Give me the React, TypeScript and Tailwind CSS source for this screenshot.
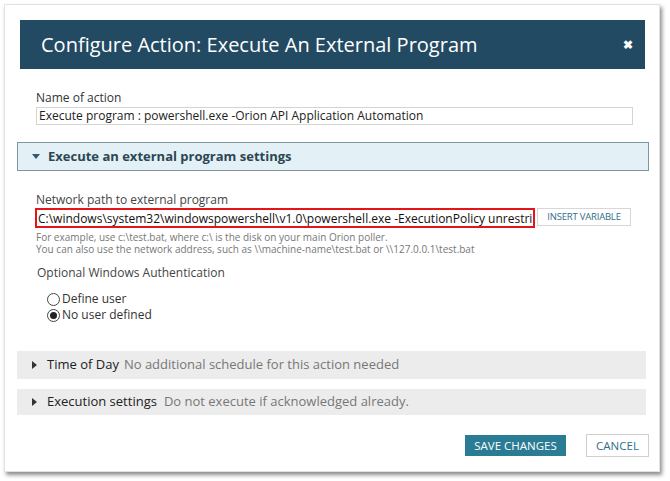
import React from "react";

const font = { fontFamily: '"Open Sans", "Noto Sans", Arial, sans-serif' };

function CaretDown() {
  return (
    <svg width="8" height="5" viewBox="0 0 8 5" className="shrink-0">
      <path d="M0 0 L8 0 L4 5 Z" fill="#2f5b70" />
    </svg>
  );
}

function CaretRight() {
  return (
    <svg width="5" height="8" viewBox="0 0 5 8" className="shrink-0">
      <path d="M0 0 L5 4 L0 8 Z" fill="#333" />
    </svg>
  );
}

function Radio({ checked }: { checked?: boolean }) {
  return (
    <span className="w-[13px] h-[13px] rounded-full border border-[#444] bg-white flex items-center justify-center shrink-0 mr-[1px]">
      {checked && <span className="w-[7px] h-[7px] rounded-full bg-[#222]" />}
    </span>
  );
}

export default function App() {
  return (
    <div className="w-[670px] h-[481px] bg-white pt-[4px] pl-[4px]" style={font}>
      <div className="w-[656px] h-[468px] bg-white shadow-[2px_3px_4px_rgba(0,0,0,0.45)] border border-[#e2e2e2] flex flex-col">
        {/* header */}
        <div className="mt-[15px] ml-[15px] w-[625px] h-[49px] bg-[#234a63] flex items-center justify-between pl-[21px] pr-[12px]">
          <span className="text-white text-[20px] leading-none">Configure Action: Execute An External Program</span>
          <span className="text-white text-[12px] font-bold leading-none">✖</span>
        </div>

        {/* name of action */}
        <div className="ml-[31px] mt-[21px] text-[12px] leading-[16px] text-[#333]">Name of action</div>
        <div className="ml-[31px] mt-[1px] w-[597px] h-[18px] border border-[#d4d4d4] flex items-center px-[2px] text-[12px] text-[#222] whitespace-nowrap overflow-hidden">
          Execute program : powershell.exe -Orion API Application Automation
        </div>

        {/* section header */}
        <div className="ml-[12px] mt-[17px] w-[632px] h-[29px] bg-[#e3f0f5] border border-[#7e97a3] flex items-center pl-[14px] gap-[8px]">
          <CaretDown />
          <span className="text-[13px] font-bold text-[#2c4654]">Execute an external program settings</span>
        </div>

        {/* network path */}
        <div className="ml-[31px] mt-[21px] text-[12px] leading-[16px] text-[#444]">Network path to external program</div>
        <div className="ml-[30px] flex items-start">
          <div className="w-[500px] h-[20px] border-2 border-[#e5141b] flex items-center overflow-hidden whitespace-nowrap pl-[1px] text-[12px] text-[#111]">
            <span className="border-r border-[#111] pr-[1px] leading-[15px]">C:\windows\system32\windowspowershell\v1.0\powershell.exe -ExecutionPolicy unrestri</span>
          </div>
          <div className="ml-[2px] w-[94px] h-[18px] border border-[#d7d7d7] flex items-center justify-center text-[9.5px] text-[#2f6f8a] tracking-[-0.2px]">
            INSERT VARIABLE
          </div>
        </div>
        <div className="ml-[31px] mt-[3px] text-[10px] leading-[12px] text-[#777]">
          <div>For example, use c:\test.bat, where c:\ is the disk on your main Orion poller.</div>
          <div>You can also use the network address, such as \\machine-name\test.bat or \\127.0.0.1\test.bat</div>
        </div>

        {/* auth */}
        <div className="ml-[32px] mt-[10px] text-[12px] leading-[16px] text-[#444]">Optional Windows Authentication</div>
        <div className="ml-[42px] mt-[10px] flex flex-col text-[12px] leading-[16px] text-[#333]">
          <div className="flex items-center gap-[1px]">
            <Radio />
            <span>Define user</span>
          </div>
          <div className="flex items-center gap-[1px]">
            <Radio checked />
            <span>No user defined</span>
          </div>
        </div>

        {/* collapsed sections */}
        <div className="ml-[12px] mt-[28px] w-[629px] h-[28px] bg-[#ececed] flex items-center pl-[15px] gap-[10px]">
          <CaretRight />
          <span className="text-[13px] text-[#222]">Time of Day</span>
          <span className="text-[13px] text-[#777] -ml-[5px]">No additional schedule for this action needed</span>
        </div>
        <div className="ml-[12px] mt-[10px] w-[629px] h-[26px] bg-[#ececed] flex items-center pl-[15px] gap-[10px]">
          <CaretRight />
          <span className="text-[13px] text-[#222]">Execution settings</span>
          <span className="text-[13px] text-[#777] -ml-[3px]">Do not execute if acknowledged already.</span>
        </div>

        {/* buttons */}
        <div className="mt-[20px] mr-[10px] flex justify-end gap-[20px]">
          <div className="w-[101px] h-[21px] bg-[#2a7b94] text-white text-[11.5px] flex items-center justify-center">SAVE CHANGES</div>
          <div className="w-[63px] h-[23px] -mt-[1px] border border-[#cfcfcf] bg-white text-[#2f6f8a] text-[11.5px] flex items-center justify-center">CANCEL</div>
        </div>
      </div>
    </div>
  );
}
